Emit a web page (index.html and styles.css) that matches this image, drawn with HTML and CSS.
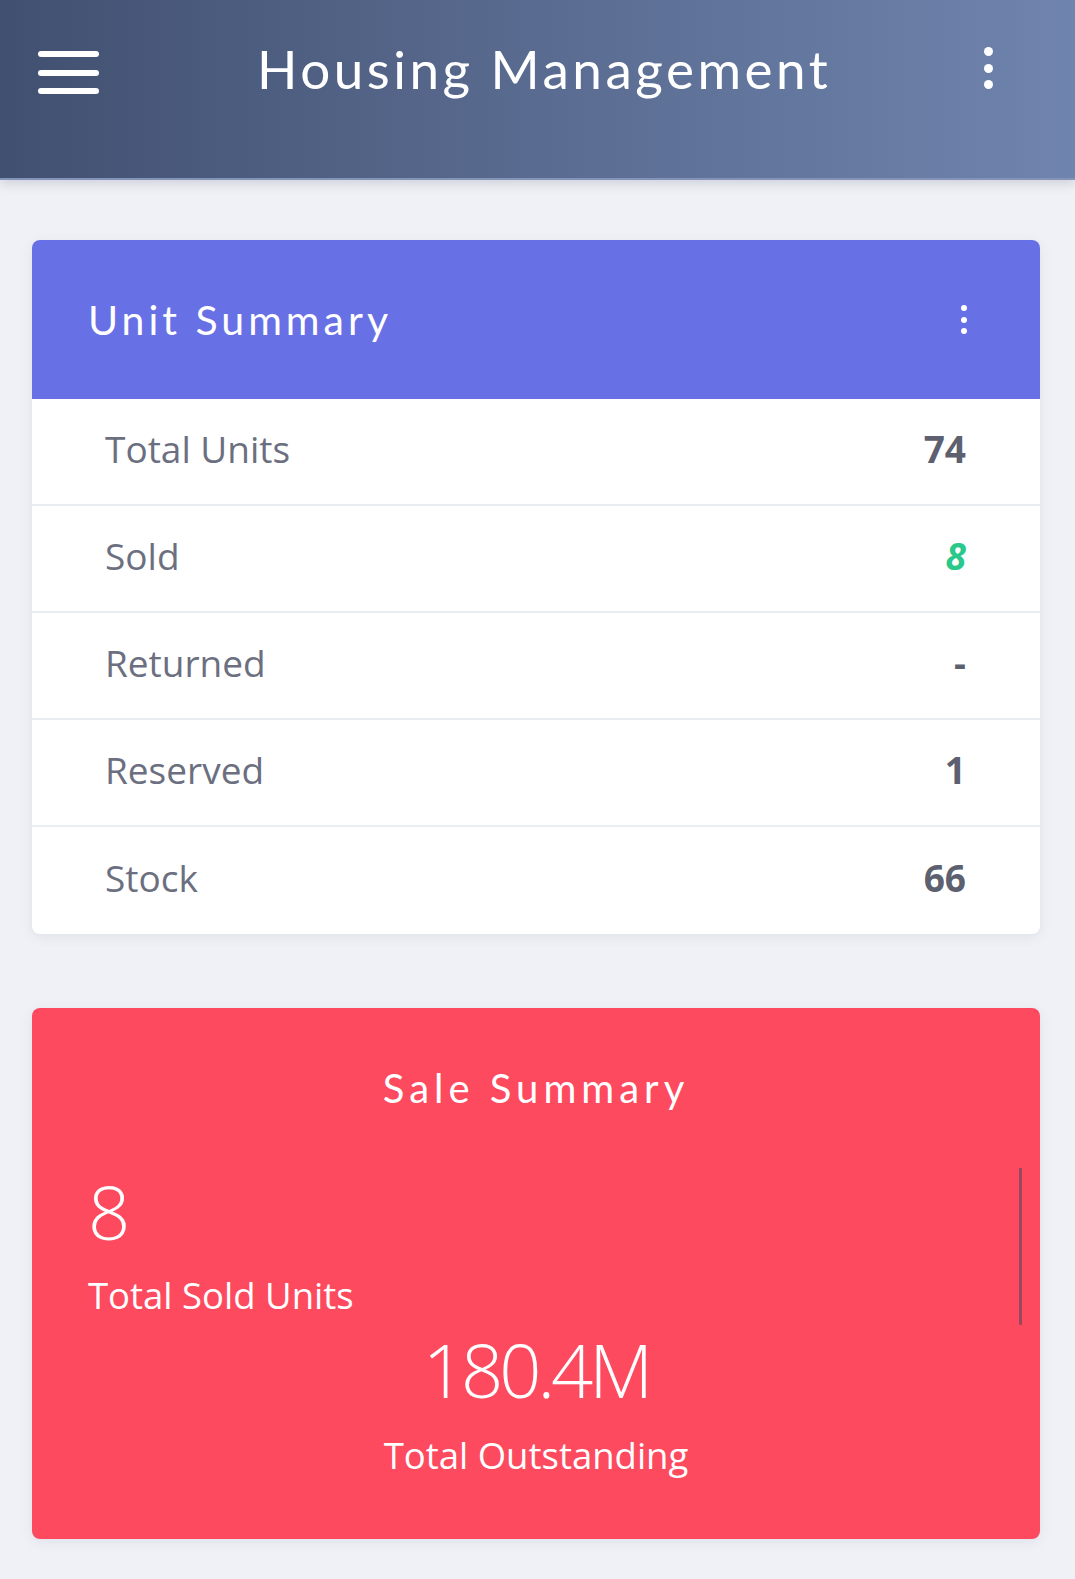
FILE: index.html
```
<!DOCTYPE html>
<html lang="en">
<head>
<meta charset="utf-8">
<title>Housing Management</title>
<link rel="stylesheet" href="styles.css">
</head>
<body>
<header class="appbar">
  <div class="toolbar">
    <button class="menu-btn" aria-label="Menu">
      <span class="bar"></span><span class="bar"></span><span class="bar"></span>
    </button>
    <h1 class="app-title">Housing Management</h1>
    <button class="kebab kebab-lg" aria-label="More">
      <span class="dot"></span><span class="dot"></span><span class="dot"></span>
    </button>
  </div>
</header>

<main class="content">
  <section class="card unit-card">
    <div class="card-head">
      <h2 class="card-title">Unit Summary</h2>
      <button class="kebab kebab-sm" aria-label="Options">
        <span class="dot"></span><span class="dot"></span><span class="dot"></span>
      </button>
    </div>
    <ul class="stat-list">
      <li class="stat-row"><span class="stat-label">Total Units</span><span class="stat-value">74</span></li>
      <li class="stat-row"><span class="stat-label">Sold</span><span class="stat-value stat-green">8</span></li>
      <li class="stat-row"><span class="stat-label">Returned</span><span class="stat-value">-</span></li>
      <li class="stat-row"><span class="stat-label">Reserved</span><span class="stat-value">1</span></li>
      <li class="stat-row"><span class="stat-label">Stock</span><span class="stat-value">66</span></li>
    </ul>
  </section>

  <section class="card sale-card">
    <h2 class="sale-title">Sale Summary</h2>
    <div class="sale-body">
      <div class="sale-item sale-left">
        <div class="sale-num">8</div>
        <div class="sale-label">Total Sold Units</div>
      </div>
      <div class="sale-item sale-center">
        <div class="sale-num sale-num-2">180.4M</div>
        <div class="sale-label sale-label-2">Total Outstanding</div>
      </div>
      <span class="scroll-thumb"></span>
    </div>
  </section>
</main>
</body>
</html>
```

FILE: styles.css
```
* { box-sizing: border-box; }

html, body {
  margin: 0;
  padding: 0;
}

body {
  background: #f0f1f6;
  font-family: "Open Sans", "Liberation Sans", sans-serif;
  width: 1075px;
  min-height: 1579px;
}

button {
  background: none;
  border: 0;
  padding: 0;
  margin: 0;
  cursor: pointer;
}

/* ---------- App bar ---------- */
.appbar {
  height: 180px;
  background: linear-gradient(90deg, #415070 0%, #55668a 40%, #6f84ae 100%);
  border-bottom: 2px solid #8494b8;
  box-shadow: 0 4px 10px rgba(60, 70, 100, 0.18);
}

.toolbar {
  height: 136px;
  display: flex;
  align-items: center;
  padding-left: 38px;
}

.menu-btn {
  width: 61px;
  display: flex;
  flex-direction: column;
  gap: 12.5px;
  margin-top: 9px;
}

.menu-btn .bar {
  display: block;
  height: 6px;
  border-radius: 3px;
  background: #ffffff;
}

.app-title {
  margin: 0 0 0 158px;
  font-family: "Lato", "Noto Sans", sans-serif;
  font-weight: 400;
  font-size: 53px;
  line-height: 1;
  color: #ffffff;
  letter-spacing: 3.5px;
  white-space: nowrap;
}

.kebab {
  display: flex;
  flex-direction: column;
  align-items: center;
}

.kebab .dot {
  display: block;
  border-radius: 50%;
  background: #ffffff;
}

.kebab-lg {
  margin-left: auto;
  margin-right: 82px;
  gap: 7.5px;
}

.kebab-lg .dot {
  width: 9px;
  height: 9px;
}

.kebab-sm {
  gap: 5.5px;
}

.kebab-sm .dot {
  width: 6px;
  height: 6px;
}

/* ---------- Content ---------- */
.content {
  padding: 60px 35px 40px 32px;
  display: flex;
  flex-direction: column;
  gap: 74px;
}

.card {
  border-radius: 8px;
  overflow: hidden;
  box-shadow: 0 3px 12px rgba(90, 100, 140, 0.10);
}

.unit-card {
  background: #ffffff;
}

.card-head {
  height: 159px;
  background: #6870e6;
  display: flex;
  align-items: center;
  justify-content: space-between;
  padding: 0 73px 0 56px;
}

.card-title {
  margin: 0;
  font-family: "Lato", "Noto Sans", sans-serif;
  font-weight: 400;
  font-size: 41px;
  line-height: 1;
  letter-spacing: 4px;
  color: #ffffff;
}

.stat-list {
  list-style: none;
  margin: 0;
  padding: 0;
}

.stat-row {
  height: 107px;
  display: flex;
  align-items: center;
  justify-content: space-between;
  padding: 0 74px 6px 73px;
  border-bottom: 2px solid #e9ecf1;
  font-size: 37px;
  line-height: 1;
}

.stat-row:last-child {
  border-bottom: 0;
}

.stat-label {
  color: #6b6f80;
}

.stat-value {
  color: #5d606f;
  font-weight: 700;
}

.stat-green {
  color: #2bc88c;
  font-style: italic;
}

/* ---------- Sale summary ---------- */
.sale-card {
  background: #fe4a5f;
  color: #ffffff;
  height: 531px;
  padding: 60px 56px 0 56px;
}

.sale-title {
  margin: 0;
  text-align: center;
  font-family: "Lato", "Noto Sans", sans-serif;
  font-weight: 400;
  font-size: 40px;
  line-height: 1;
  letter-spacing: 5px;
}

.sale-body {
  position: relative;
  margin-top: 67px;
}

.sale-num {
  font-weight: 300;
  font-size: 74px;
  line-height: 1;
}

.sale-num-2 {
  letter-spacing: -4px;
}

.sale-label {
  font-size: 36.5px;
  line-height: 1;
  margin-top: 28px;
}

.sale-center {
  text-align: center;
  margin-top: 19px;
}

.sale-label-2 {
  margin-top: 30px;
}

.scroll-thumb {
  position: absolute;
  top: -7px;
  right: -38px;
  width: 3px;
  height: 157px;
  background: rgba(70, 70, 90, 0.55);
  border-radius: 1px;
}
```
